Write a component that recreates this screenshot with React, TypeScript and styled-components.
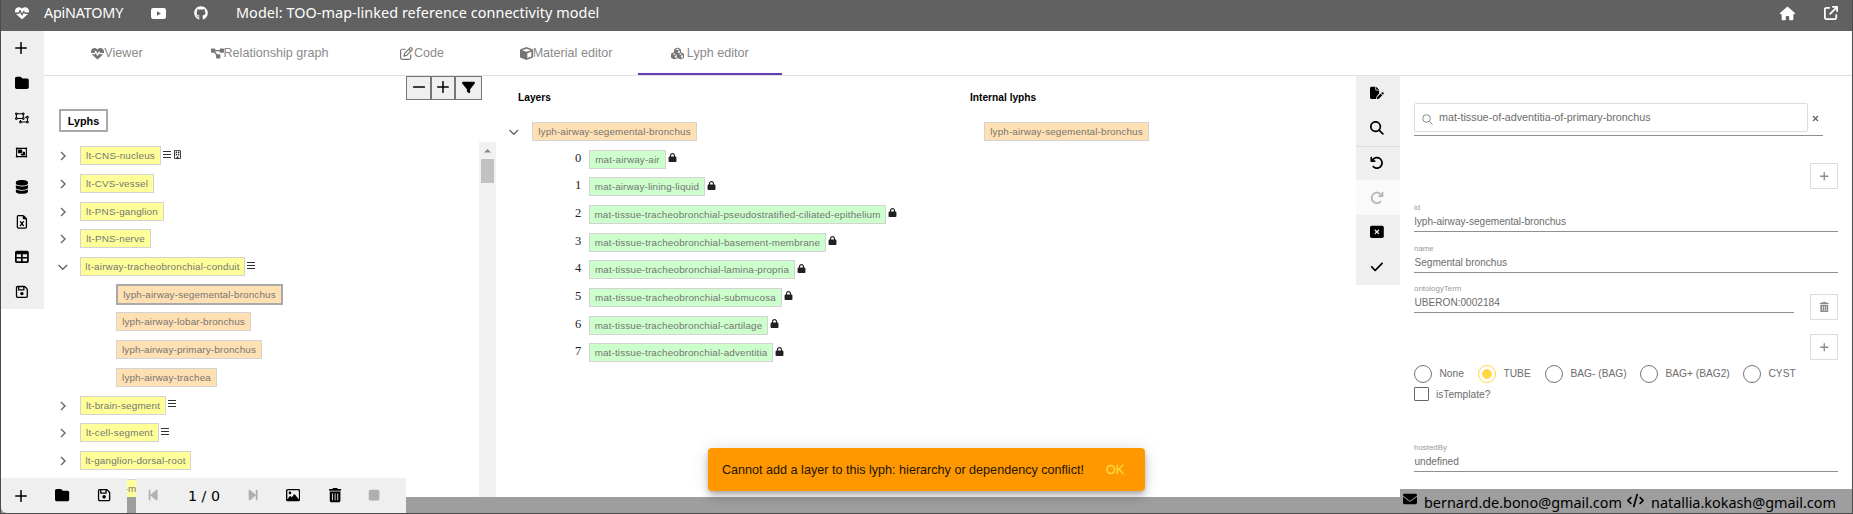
import React from 'react';
import styled, { createGlobalStyle, css } from 'styled-components';
import type { IconType } from 'react-icons';
import {
  FaHeartPulse, FaGithub, FaHouse, FaArrowUpRightFromSquare, FaPlus, FaFolder,
  FaRegObjectUngroup, FaRegObjectGroup, FaDatabase, FaRegFileExcel, FaTable, FaRegFloppyDisk,
  FaDiagramProject, FaRegPenToSquare, FaCube, FaCubes, FaFilter, FaFilePen, FaMagnifyingGlass,
  FaArrowRotateLeft, FaArrowRotateRight, FaRectangleXmark, FaCheck, FaBackwardStep, FaForwardStep,
  FaRegImage, FaTrashCan, FaStop, FaLock, FaRegBuilding, FaEnvelope, FaCode,
} from 'react-icons/fa6';

const Global = createGlobalStyle`
  * { box-sizing: border-box; }
  body { margin: 0; background: #fff; font-family: "Liberation Sans", Arial, sans-serif; overflow: hidden; }
  svg { display: block; flex: none; }
`;

const YELLOW = '#ffff99';
const ORANGE = '#ffe0b2';
const GREEN = '#ccffcc';

const Page = styled.div`
  position: relative;
  display: flex;
  flex-direction: column;
  width: 1853px;
  height: 514px;
  border-left: 1px solid #4c4c4c;
  border-right: 1px solid #4c4c4c;
  border-bottom: 1px solid #4c4c4c;
`;

const Header = styled.header`
  display: flex;
  align-items: center;
  flex: none;
  height: 31px;
  padding: 0 14px 5px;
  background: #616161;
  color: #fff;
  font: 14.4px/20px "Noto Sans", sans-serif;
  white-space: nowrap;
`;
const Brand = styled.span`
  margin-left: 15px;
  width: 107px;
  letter-spacing: -0.22px;
`;
const Title = styled.span`
  margin-left: 28px;
  flex: 1;
  letter-spacing: 0.06px;
`;
const HeaderIcon = styled.span<{ $gap: number }>`
  margin-left: ${(p) => p.$gap}px;
`;

const Workspace = styled.div`
  display: flex;
  flex: 1;
  min-height: 0;
  align-items: flex-start;
`;

const Rail = styled.nav`
  display: flex;
  flex-direction: column;
  flex: none;
  background: #efefef;
`;
const RailButton = styled.div<{ $disabled?: boolean; $divider?: boolean; $w: number; $size?: number }>`
  display: flex;
  align-items: center;
  width: ${(p) => p.$w}px;
  height: 34.75px;
  padding-left: 14px;
  font-size: ${(p) => p.$size ?? 13.8}px;
  svg { width: auto; height: 1em; }
  ${(p) => p.$disabled && css`background: #fafafa; color: #b5b5b5;`}
  ${(p) => p.$divider && css`border-top: 1px solid #dcdcdc;`}
`;

const Content = styled.div`
  display: flex;
  flex-direction: column;
  flex: 1;
  height: 466px;
`;
const Tabs = styled.div`
  display: flex;
  flex: none;
  height: 45px;
  padding-left: 1px;
  border-bottom: 1px solid #e0e0e0;
`;
const Tab = styled.div<{ $active?: boolean; $gap?: number }>`
  display: flex;
  align-items: center;
  justify-content: center;
  gap: ${(p) => p.$gap ?? 0}px;
  min-width: 144px;
  height: 44px;
  padding: 2px 21.5px 0;
  border-bottom: 2px solid ${(p) => (p.$active ? '#673ab7' : 'transparent')};
  color: #8a8a8a;
  font-size: 12.6px;
  white-space: nowrap;
  svg { color: #757575; }
`;

const Body = styled.div`
  display: flex;
  flex: 1;
  min-height: 0;
`;
const TreePanel = styled.section`
  display: flex;
  flex-direction: column;
  width: 452px;
  overflow: hidden;
`;
const Tools = styled.div`
  display: flex;
  flex: none;
  margin-left: 362px;
  height: 24px;
`;
const ToolButton = styled.div<{ $w: number }>`
  display: flex;
  align-items: center;
  justify-content: center;
  width: ${(p) => p.$w}px;
  border: 1px solid #767676;
  background: #efefef;
  font-size: 13px;
  padding-bottom: 2px;
`;
const TreeTitle = styled.div`
  flex: none;
  align-self: flex-start;
  height: 23px;
  width: 49px;
  margin: 9px 0 10px 15px;
  border: 2px solid #a9a9a9;
  font: bold 10.8px/20px "Liberation Sans", sans-serif;
  text-align: center;
`;
const TreeArea = styled.div`
  display: flex;
  flex: 1;
  min-height: 0;
`;
const TreeList = styled.div`
  flex: 1;
  overflow: hidden;
`;
const ScrollTrack = styled.div`
  display: flex;
  flex-direction: column;
  align-items: center;
  width: 17px;
  background: #f1f1f1;
`;
const ScrollThumb = styled.div`
  width: 13px;
  height: 24px;
  background: #c1c1c1;
`;
const Row = styled.div<{ $indent: number }>`
  display: flex;
  align-items: center;
  height: 27.7px;
  padding-left: ${(p) => p.$indent}px;
`;
const Chevron = styled.svg`
  width: 10px;
  height: 10px;
  margin-top: 1px;
  fill: none;
  stroke: #666;
  stroke-width: 1.4;
`;
const ChevronCell = styled.span<{ $w: number }>`
  width: ${(p) => p.$w}px;
`;
const Tag = styled.span<{ $bg: string; $w: number; $selected?: boolean }>`
  flex: none;
  width: ${(p) => p.$w}px;
  height: ${(p) => (p.$selected ? 21 : 19)}px;
  border: ${(p) => (p.$selected ? '2px solid #a9a9a9' : '1px solid #d3d3d3')};
  background: ${(p) => p.$bg};
  color: #757575;
  font-size: 9.9px;
  line-height: 17px;
  letter-spacing: ${(p) => (p.$bg === YELLOW ? 0.18 : 0.14)}px;
  text-align: center;
  white-space: nowrap;
`;
const Marks = styled.span`
  display: flex;
  gap: 2px;
  margin: -3px 0 0 2px;
  font-size: 9px;
  color: #212121;
`;
const Column = styled.section<{ $w: number; $pad: number }>`
  width: ${(p) => p.$w}px;
  padding: 15px 0 0 ${(p) => p.$pad}px;
`;
const ColumnTitle = styled.h3<{ $indent?: number }>`
  margin: 0 0 13.5px;
  padding-left: ${(p) => p.$indent ?? 0}px;
  font: bold 10.2px/13px "Liberation Sans", sans-serif;
`;
const Index = styled.span`
  width: 14px;
  margin-top: -2px;
  color: #222;
  font: 12.6px/15px "Liberation Serif", serif;
`;

const Form = styled.section`
  flex: 1;
  padding: 27px 14px 0 14px;
  color: #6c6c6c;
`;
const SearchRow = styled.div`
  display: flex;
  align-items: center;
  width: 409px;
  height: 33px;
  padding-bottom: 3px;
  border-bottom: 1px solid #8f8f8f;
`;
const SearchBox = styled.div`
  display: flex;
  align-items: center;
  gap: 6px;
  width: 394px;
  height: 29px;
  padding: 0 7px 2px;
  border: 1px solid #dcdcdc;
  border-radius: 2px;
  font-size: 10.8px;
  letter-spacing: -0.02px;
  svg { margin-top: 6px; }
`;
const Clear = styled.svg`
  margin: 2px 0 0 4px;
  stroke: #666;
  stroke-width: 1.3;
`;
const ButtonRow = styled.div<{ $top: number }>`
  display: flex;
  justify-content: flex-end;
  margin-top: ${(p) => p.$top}px;
`;
const SmallButton = styled.div<{ $drop?: number }>`
  display: flex;
  align-items: center;
  justify-content: center;
  flex: none;
  width: 28px;
  height: 26px;
  margin-bottom: ${(p) => -(p.$drop ?? 0)}px;
  border: 1px solid #dcdcdc;
  font-size: 10.5px;
  color: #8a8a8a;
`;
const FieldRow = styled.div<{ $top: number }>`
  display: flex;
  gap: 16px;
  align-items: flex-end;
  height: 29px;
  margin-top: ${(p) => p.$top}px;
`;
const Field = styled.div`
  flex: 1;
  height: 29px;
  border-bottom: 1px solid #8f8f8f;
  label { display: block; font-size: 7.9px; line-height: 9px; color: #999; }
  span { display: block; font-size: 10.1px; line-height: 12px; padding: 4px 0 0 0.5px; }
`;
const Radios = styled.div`
  display: flex;
  margin-top: 5px;
  font-size: 10.2px;
  line-height: 18px;
`;
const RadioOption = styled.div<{ $w: number; $on?: boolean }>`
  display: flex;
  gap: 7.5px;
  width: ${(p) => p.$w}px;
  white-space: nowrap;
  i {
    display: block;
    width: 18px;
    height: 18px;
    border: 1px solid ${(p) => (p.$on ? '#ffd740' : '#757575')};
    border-radius: 50%;
    ${(p) => p.$on && css`background: radial-gradient(#ffd740 0 4.5px, #fff 5px);`}
  }
`;
const CheckRow = styled.div`
  display: flex;
  align-items: center;
  gap: 7px;
  margin-top: 4px;
  font-size: 10.2px;
  i { width: 15px; height: 14px; border: 1px solid #666; border-radius: 1px; }
`;

const Strip = styled.div`
  flex: none;
  height: 16px;
  background: #9e9e9e;
`;
const BottomBar = styled.div<{ $left: number; $w: number }>`
  position: absolute;
  left: ${(p) => p.$left}px;
  bottom: 0;
  display: flex;
  width: ${(p) => p.$w}px;
  height: 35px;
  background: #efefef;
  border-bottom-left-radius: ${(p) => (p.$left === 0 ? 6 : 0)}px;
`;
const BarItem = styled.div<{ $w: number; $disabled?: boolean }>`
  display: flex;
  align-items: center;
  justify-content: center;
  width: ${(p) => p.$w}px;
  font: 14.2px/20px "DejaVu Sans", sans-serif;
  white-space: nowrap;
  color: ${(p) => (p.$disabled ? '#b0b0b0' : '#000')};
`;
const Contact = styled.footer`
  position: absolute;
  right: 0;
  bottom: 0;
  display: flex;
  width: 452px;
  height: 24px;
  padding: 4px 0 0 3px;
  background: #9e9e9e;
  border-bottom-right-radius: 6px;
  font: 14.4px/20px "Noto Sans", sans-serif;
  white-space: nowrap;
  svg { margin-top: -1px; }
`;
const Mail = styled.span<{ $w: number }>`
  flex: none;
  width: ${(p) => p.$w}px;
  margin-left: 7px;
`;
const Snackbar = styled.div`
  position: absolute;
  left: 707px;
  top: 448px;
  display: flex;
  align-items: center;
  width: 437px;
  height: 43px;
  padding: 0 14px;
  border-radius: 4px;
  background: #ff9800;
  box-shadow: 0 3px 5px -1px rgba(0,0,0,.2), 0 6px 10px rgba(0,0,0,.14), 0 1px 18px rgba(0,0,0,.12);
  font-size: 12.6px;
  color: #211400;
  white-space: nowrap;
`;
const SnackText = styled.span`
  width: 384px;
`;
const SnackAction = styled.span`
  color: #ffd740;
  -webkit-text-stroke: 0.3px #ffd740;
`;

const Right = () => <Chevron viewBox="0 0 10 10"><path d="M1 1l4 4-4 4" /></Chevron>;
const Down = () => <Chevron viewBox="0 0 10 10"><path d="M.5 3l4.300 4.200L9.100 3" /></Chevron>;
const Bars = () => (
  <svg width="8" height="9" viewBox="0 0 8 9">
    <path d="M0 1.500h8M0 4.500h8M0 7.500h8" stroke="#333" strokeWidth="1.100" />
  </svg>
);
const ThinPlus = () => (
  <svg width="12" height="12" viewBox="0 0 12 12" style={undefined}>
    <path d="M6 .7v10.600M.7 6h10.600" stroke="currentColor" strokeWidth="1.500" strokeLinecap="round" />
  </svg>
);
const RailPlus = styled.span`
  svg { width: 12px; height: 12px; }
`;
const ThinMinus = () => (
  <svg width="12" height="12" viewBox="0 0 12 12">
    <path d="M.7 6h10.600" stroke="currentColor" strokeWidth="1.700" strokeLinecap="round" />
  </svg>
);
const VideoLogo = () => (
  <svg width="15" height="11" viewBox="0 0 15 11">
    <rect width="15" height="11" rx="2.200" fill="#fff" />
    <path d="M6 3.200v4.600l3.900-2.300z" fill="#616161" />
  </svg>
);
const Magnifier = () => (
  <svg width="11" height="11" viewBox="0 0 11 11" fill="none" stroke="#858585">
    <circle cx="4.500" cy="4.500" r="3.800" /><path d="M7.300 7.300L10.500 10.500" />
  </svg>
);

const LEFT_ICONS: { icon: IconType; size?: number }[] = [
  { icon: FaFolder }, { icon: FaRegObjectUngroup }, { icon: FaRegObjectGroup, size: 13 }, { icon: FaDatabase },
  { icon: FaRegFileExcel }, { icon: FaTable }, { icon: FaRegFloppyDisk },
];
const TABS: { icon: IconType; label: string; active?: boolean; gap?: number }[] = [
  { icon: FaHeartPulse, label: 'Viewer' },
  { icon: FaDiagramProject, label: 'Relationship graph' },
  { icon: FaRegPenToSquare, label: 'Code', gap: 1 },
  { icon: FaCube, label: 'Material editor' },
  { icon: FaCubes, label: 'Lyph editor', active: true, gap: 2.5 },
];
type Node = { label: string; w: number; open?: boolean; bars?: boolean; building?: boolean; child?: boolean; selected?: boolean };
const TREE: Node[] = [
  { label: 'lt-CNS-nucleus', w: 81, bars: true, building: true },
  { label: 'lt-CVS-vessel', w: 74 },
  { label: 'lt-PNS-ganglion', w: 84 },
  { label: 'lt-PNS-nerve', w: 71 },
  { label: 'lt-airway-tracheobronchial-conduit', w: 165, open: true, bars: true },
  { label: 'lyph-airway-segemental-bronchus', w: 167, child: true, selected: true },
  { label: 'lyph-airway-lobar-bronchus', w: 135, child: true },
  { label: 'lyph-airway-primary-bronchus', w: 146, child: true },
  { label: 'lyph-airway-trachea', w: 101, child: true },
  { label: 'lt-brain-segment', w: 86, bars: true },
  { label: 'lt-cell-segment', w: 79, bars: true },
  { label: 'lt-ganglion-dorsal-root', w: 111 },
  { label: 'lt-kidney-mural', w: 80 },
];
const LAYERS: [string, number][] = [
  ['mat-airway-air', 77],
  ['mat-airway-lining-liquid', 116],
  ['mat-tissue-tracheobronchial-pseudostratified-ciliated-epithelium', 297],
  ['mat-tissue-tracheobronchial-basement-membrane', 237],
  ['mat-tissue-tracheobronchial-lamina-propria', 206],
  ['mat-tissue-tracheobronchial-submucosa', 193],
  ['mat-tissue-tracheobronchial-cartilage', 179],
  ['mat-tissue-tracheobronchial-adventitia', 184],
];

export default function App() {
  return (
    <Page>
      <Global />
      <Header>
        <FaHeartPulse size={14} />
        <Brand>ApiNATOMY</Brand>
        <VideoLogo />
        <HeaderIcon $gap={28}><FaGithub size={14} /></HeaderIcon>
        <Title>Model: TOO-map-linked reference connectivity model</Title>
        <FaHouse size={15} />
        <HeaderIcon $gap={29}><FaArrowUpRightFromSquare size={14} /></HeaderIcon>
      </Header>
      <Workspace>
        <Rail>
          <RailButton $w={43} $size={12}><RailPlus><ThinPlus /></RailPlus></RailButton>
          {LEFT_ICONS.map(({ icon: Icon, size }, i) => <RailButton key={i} $w={43} $size={size}><Icon /></RailButton>)}
        </Rail>
        <Content>
          <Tabs>
            {TABS.map(({ icon: Icon, label, active, gap }) => (
              <Tab key={label} $active={active} $gap={gap}><Icon size={13} />{label}</Tab>
            ))}
          </Tabs>
          <Body>
            <TreePanel>
              <Tools>
                <ToolButton $w={25}><ThinMinus /></ToolButton>
                <ToolButton $w={24}><ThinPlus /></ToolButton>
                <ToolButton $w={27}><FaFilter /></ToolButton>
              </Tools>
              <TreeTitle>Lyphs</TreeTitle>
              <TreeArea>
                <TreeList>
                  {TREE.map((n) => (
                    <Row key={n.label} $indent={n.child ? 72 : n.open ? 14 : 16}>
                      {!n.child && <ChevronCell $w={n.open ? 22 : 20}>{n.open ? <Down /> : <Right />}</ChevronCell>}
                      <Tag $bg={n.child ? ORANGE : YELLOW} $w={n.w} $selected={n.selected}>{n.label}</Tag>
                      <Marks>{n.bars && <Bars />}{n.building && <FaRegBuilding />}</Marks>
                    </Row>
                  ))}
                </TreeList>
                <ScrollTrack>
                  <svg width="17" height="17" viewBox="0 0 17 17"><path d="M5 10.500L8.500 7l3.500 3.500z" fill="#888" /></svg>
                  <ScrollThumb />
                </ScrollTrack>
              </TreeArea>
            </TreePanel>
            <Column $w={474} $pad={13}>
              <ColumnTitle $indent={9}>Layers</ColumnTitle>
              <Row $indent={0}>
                <ChevronCell $w={23}><Down /></ChevronCell>
                <Tag $bg={ORANGE} $w={165}>lyph-airway-segemental-bronchus</Tag>
              </Row>
              {LAYERS.map(([name, w], i) => (
                <Row key={name} $indent={66}>
                  <Index>{i}</Index>
                  <Tag $bg={GREEN} $w={w}>{name}</Tag>
                  <Marks><FaLock /></Marks>
                </Row>
              ))}
            </Column>
            <Column $w={386} $pad={0}>
              <ColumnTitle>Internal lyphs</ColumnTitle>
              <Row $indent={14}><Tag $bg={ORANGE} $w={165}>lyph-airway-segemental-bronchus</Tag></Row>
            </Column>
            <div>
              <Rail>
                <RailButton $w={44}><FaFilePen /></RailButton>
                <RailButton $w={44}><FaMagnifyingGlass /></RailButton>
                <RailButton $w={44} $divider><FaArrowRotateLeft /></RailButton>
                <RailButton $w={44} $disabled><FaArrowRotateRight /></RailButton>
                <RailButton $w={44}><FaRectangleXmark /></RailButton>
                <RailButton $w={44}><FaCheck /></RailButton>
              </Rail>
            </div>
            <Form>
              <SearchRow>
                <SearchBox><Magnifier />mat-tissue-of-adventitia-of-primary-bronchus</SearchBox>
                <Clear width="7" height="7" viewBox="0 0 7 7"><path d="M1 1l5 5M6 1l-5 5" /></Clear>
              </SearchRow>
              <ButtonRow $top={27}><SmallButton><FaPlus /></SmallButton></ButtonRow>
              <FieldRow $top={14}><Field><label>id</label><span>lyph-airway-segemental-bronchus</span></Field></FieldRow>
              <FieldRow $top={12}><Field><label>name</label><span>Segmental bronchus</span></Field></FieldRow>
              <FieldRow $top={11}>
                <Field><label>ontologyTerm</label><span>UBERON:0002184</span></Field>
                <SmallButton $drop={7}><FaTrashCan /></SmallButton>
              </FieldRow>
              <ButtonRow $top={21}><SmallButton><FaPlus /></SmallButton></ButtonRow>
              <Radios>
                <RadioOption $w={64}><i />None</RadioOption>
                <RadioOption $w={67} $on><i />TUBE</RadioOption>
                <RadioOption $w={95}><i />BAG- (BAG)</RadioOption>
                <RadioOption $w={103}><i />BAG+ (BAG2)</RadioOption>
                <RadioOption $w={60}><i />CYST</RadioOption>
              </Radios>
              <CheckRow><i />isTemplate?</CheckRow>
              <FieldRow $top={42}><Field><label>hostedBy</label><span>undefined</span></Field></FieldRow>
            </Form>
          </Body>
        </Content>
      </Workspace>
      <Strip />
      <BottomBar $left={0} $w={126}>
        <BarItem $w={39}><ThinPlus /></BarItem>
        <BarItem $w={45}><FaFolder /></BarItem>
        <BarItem $w={38}><FaRegFloppyDisk /></BarItem>
      </BottomBar>
      <BottomBar $left={135} $w={270}>
        <BarItem $w={35} $disabled><FaBackwardStep /></BarItem>
        <BarItem $w={66}>1 / 0</BarItem>
        <BarItem $w={33} $disabled><FaForwardStep /></BarItem>
        <BarItem $w={46}><FaRegImage /></BarItem>
        <BarItem $w={38}><FaTrashCan /></BarItem>
        <BarItem $w={40} $disabled><FaStop /></BarItem>
      </BottomBar>
      <Contact>
        <FaEnvelope size={14} />
        <Mail $w={203}>bernard.de.bono@gmail.com</Mail>
        <FaCode size={17} />
        <Mail $w={186}>natallia.kokash@gmail.com</Mail>
      </Contact>
      <Snackbar>
        <SnackText>Cannot add a layer to this lyph: hierarchy or dependency conflict!</SnackText>
        <SnackAction>OK</SnackAction>
      </Snackbar>
    </Page>
  );
}
